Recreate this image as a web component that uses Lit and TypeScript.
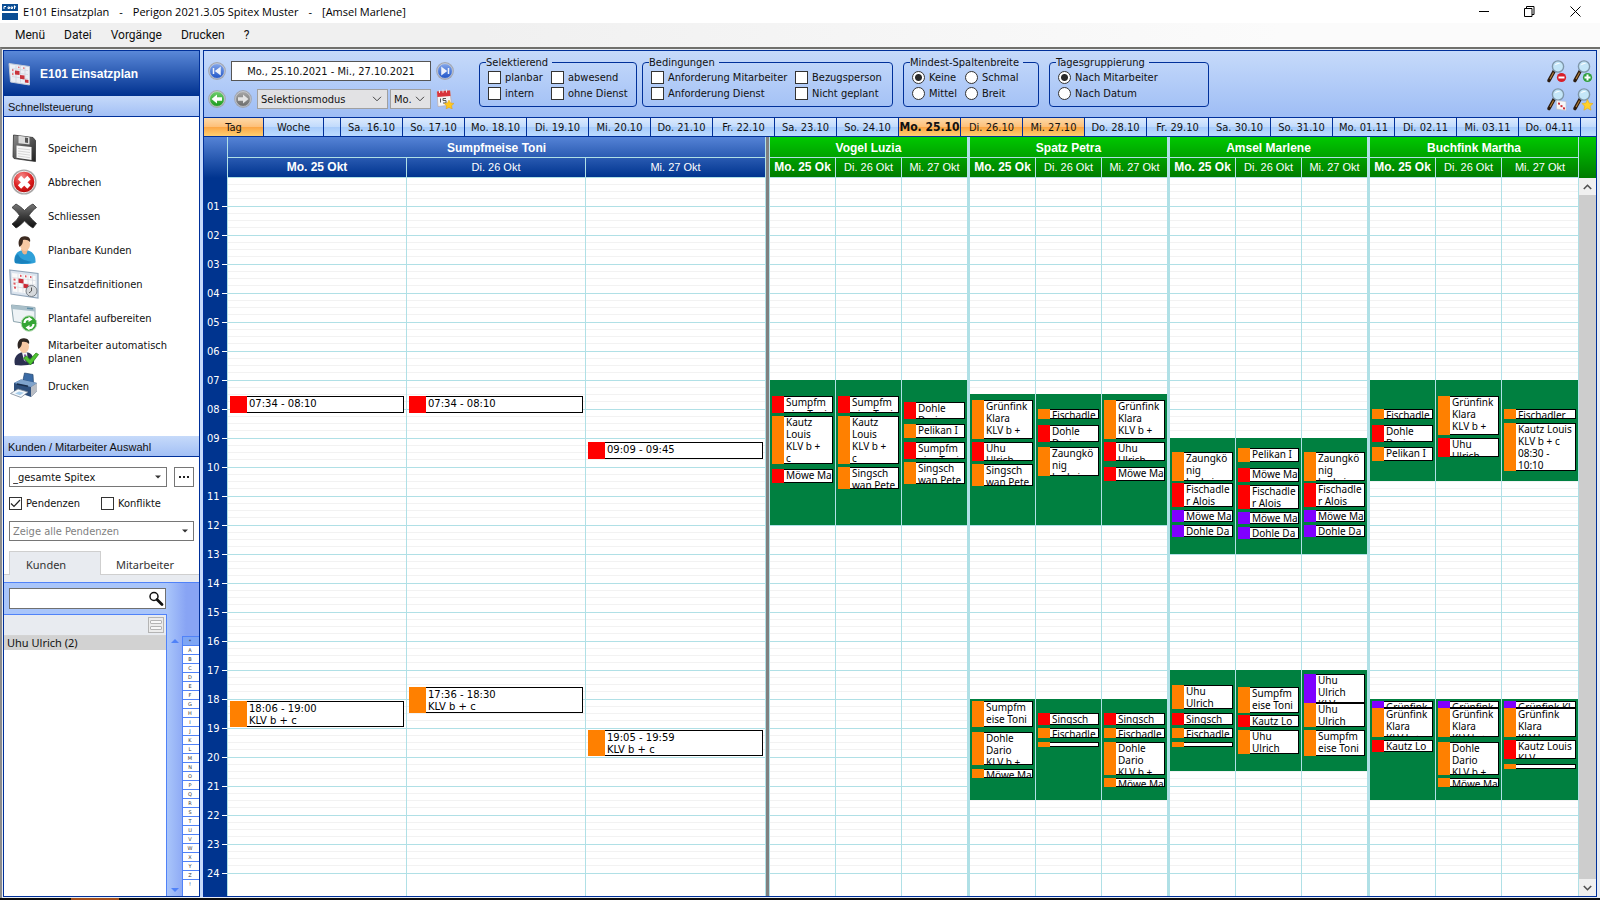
import { LitElement, html, css, svg, nothing } from "lit";
import { customElement } from "lit/decorators.js";
import { classMap } from "lit/directives/class-map.js";
import { styleMap } from "lit/directives/style-map.js";

const HOUR = 29;

type Kind = "red" | "orange" | "violet";
interface Visit {
  top: number;
  height: number;
  kind: Kind;
  lines: string[];
}
interface Day {
  label: string;
  bold?: boolean;
  shifts: [number, number][];
  visits: Visit[];
}
interface Group {
  name: string;
  main?: boolean;
  days: Day[];
}

const v = (kind: Kind, top: number, height: number, ...lines: string[]): Visit => ({ top, height, kind, lines });
const day = (label: string, shifts: [number, number][], ...visits: Visit[]): Day => ({
  label,
  bold: label.startsWith("Mo."),
  shifts,
  visits,
});

const groups: Group[] = [
  {
    name: "Sumpfmeise Toni",
    main: true,
    days: [
      day("Mo. 25 Okt", [], v("red", 218, 17, "07:34 - 08:10"), v("orange", 523, 26, "18:06 - 19:00", "KLV b + c")),
      day("Di. 26 Okt", [], v("red", 218, 17, "07:34 - 08:10"), v("orange", 509, 26, "17:36 - 18:30", "KLV b + c")),
      day("Mi. 27 Okt", [], v("red", 264, 17, "09:09 - 09:45"), v("orange", 552, 26, "19:05 - 19:59", "KLV b + c")),
    ],
  },
  {
    name: "Vogel Luzia",
    days: [
      day("Mo. 25 Ok", [[7, 12]],
        v("red", 218, 17, "Sumpfm", "eise Toni"),
        v("orange", 238, 48, "Kautz", "Louis", "KLV b +", "c"),
        v("red", 291, 14, "Möwe Ma")),
      day("Di. 26 Okt", [[7, 12]],
        v("red", 218, 17, "Sumpfm", "eise Toni"),
        v("orange", 238, 48, "Kautz", "Louis", "KLV b +", "c"),
        v("orange", 289, 22, "Singsch", "wan Pete")),
      day("Mi. 27 Okt", [[7, 12]],
        v("red", 224, 17, "Dohle", "Dario"),
        v("orange", 246, 14, "Pelikan I"),
        v("red", 264, 17, "Sumpfm", "eise Toni"),
        v("orange", 284, 22, "Singsch", "wan Pete")),
    ],
  },
  {
    name: "Spatz Petra",
    days: [
      day("Mo. 25 Ok", [[7.5, 12], [18, 21.5]],
        v("orange", 222, 39, "Grünfink", "Klara", "KLV b +"),
        v("red", 264, 19, "Uhu", "Ulrich"),
        v("orange", 286, 22, "Singsch", "wan Pete"),
        v("orange", 523, 26, "Sumpfm", "eise Toni"),
        v("orange", 554, 33, "Dohle", "Dario", "KLV b +"),
        v("orange", 591, 9, "Möwe Ma")),
      day("Di. 26 Okt", [[7.5, 12], [18, 21.5]],
        v("orange", 231, 10, "Fischadle"),
        v("red", 247, 17, "Dohle", "Dario"),
        v("orange", 269, 29, "Zaungkö", "nig", "Ludwig"),
        v("red", 535, 12, "Singsch"),
        v("orange", 550, 10, "Fischadle"),
        v("orange", 564, 5)),
      day("Mi. 27 Okt", [[7.5, 12], [18, 21.5]],
        v("orange", 222, 39, "Grünfink", "Klara", "KLV b +"),
        v("red", 264, 19, "Uhu", "Ulrich"),
        v("red", 289, 14, "Möwe Ma"),
        v("red", 535, 12, "Singsch"),
        v("orange", 550, 10, "Fischadle"),
        v("orange", 564, 33, "Dohle", "Dario", "KLV b +"),
        v("orange", 600, 9, "Möwe Ma")),
    ],
  },
  {
    name: "Amsel Marlene",
    days: [
      day("Mo. 25 Ok", [[9, 13], [17, 20.5]],
        v("orange", 274, 29, "Zaungkö", "nig", "Ludwig"),
        v("red", 305, 24, "Fischadle", "r Alois"),
        v("violet", 332, 12, "Möwe Ma"),
        v("violet", 347, 12, "Dohle Da"),
        v("orange", 507, 24, "Uhu", "Ulrich"),
        v("red", 535, 12, "Singsch"),
        v("orange", 550, 10, "Fischadle"),
        v("orange", 564, 5)),
      day("Di. 26 Okt", [[9, 13], [17, 20.5]],
        v("orange", 270, 14, "Pelikan I"),
        v("red", 290, 14, "Möwe Ma"),
        v("red", 307, 24, "Fischadle", "r Alois"),
        v("violet", 334, 12, "Möwe Ma"),
        v("violet", 349, 12, "Dohle Da"),
        v("orange", 509, 26, "Sumpfm", "eise Toni"),
        v("red", 537, 12, "Kautz Lo"),
        v("orange", 552, 24, "Uhu", "Ulrich")),
      day("Mi. 27 Okt", [[9, 13], [17, 20.5]],
        v("orange", 274, 29, "Zaungkö", "nig", "Ludwig"),
        v("red", 305, 24, "Fischadle", "r Alois"),
        v("violet", 332, 12, "Möwe Ma"),
        v("violet", 347, 12, "Dohle Da"),
        v("violet", 496, 29, "Uhu", "Ulrich", "KLV"),
        v("orange", 525, 24, "Uhu", "Ulrich"),
        v("orange", 552, 26, "Sumpfm", "eise Toni")),
    ],
  },
  {
    name: "Buchfink Martha",
    days: [
      day("Mo. 25 Ok", [[7, 10.5], [18, 21.5]],
        v("orange", 231, 10, "Fischadle"),
        v("red", 247, 17, "Dohle", "Dario"),
        v("orange", 269, 14, "Pelikan I"),
        v("violet", 523, 7, "Grünfink"),
        v("orange", 530, 29, "Grünfink", "Klara", "KLV b +"),
        v("red", 562, 12, "Kautz Lo")),
      day("Di. 26 Okt", [[7, 10.5], [18, 21.5]],
        v("orange", 218, 39, "Grünfink", "Klara", "KLV b +"),
        v("red", 260, 19, "Uhu", "Ulrich"),
        v("violet", 523, 7, "Grünfink"),
        v("orange", 530, 29, "Grünfink", "Klara", "KLV b +"),
        v("orange", 564, 33, "Dohle", "Dario", "KLV b +"),
        v("orange", 600, 9, "Möwe Ma")),
      day("Mi. 27 Okt", [[7, 10.5], [18, 21.5]],
        v("orange", 231, 10, "Fischadler"),
        v("orange", 245, 48, "Kautz Louis", "KLV b + c", "08:30 -", "10:10"),
        v("violet", 523, 7, "Grünfink Kl"),
        v("orange", 530, 29, "Grünfink", "Klara", "KLV b"),
        v("red", 562, 19, "Kautz Louis", "KLV"),
        v("orange", 586, 5)),
    ],
  },
];

const dates = [
  "Sa. 16.10", "So. 17.10", "Mo. 18.10", "Di. 19.10", "Mi. 20.10", "Do. 21.10", "Fr. 22.10", "Sa. 23.10", "So. 24.10",
  "Mo. 25.10", "Di. 26.10", "Mi. 27.10", "Do. 28.10", "Fr. 29.10", "Sa. 30.10", "So. 31.10", "Mo. 01.11", "Di. 02.11",
  "Mi. 03.11", "Do. 04.11",
];
const selectedDates = ["Mo. 25.10", "Di. 26.10", "Mi. 27.10"];

/* ---------- icons ---------- */

const planSheet = svg`
  <path d="M1 1.500 21.500 4.500V23L2.500 20Z" fill="#eceff5" stroke="#c3cad8" stroke-width="1"/>
  <path d="M4 6.500 20 8.500M4 10.500 20 12.500M4 14.500 20 17M8 3.500V20M12.500 4V20.500M17 5V21.500" stroke="#cfd4de" stroke-width=".8"/>
  <path d="M7 8.500l4.500.6v4l-4.500-.6zM12 13l4.500.6v3.800L12 16.800zM17 17.500l3.500.6v3l-3.500-.6z" fill="#c8343c"/>
  <path d="M4 7l1.500.2v2L4 9zM4 11l1.500.2v2L4 13zM10 4.500l1.500.2v1.600L10 6.100zM15 5.200l1.500.2V7L15 6.800z" fill="#e2747a"/>`;

const headIcon = svg`<svg class="i24" viewBox="0 0 24 24">${planSheet}</svg>`;

const icons: Record<string, unknown> = {
  save: svg`<svg class="i30" viewBox="0 0 30 30">
    <defs><linearGradient id="sv" x1="0" y1="0" x2="1" y2="1"><stop offset="0" stop-color="#8e8e8e"/><stop offset="1" stop-color="#202020"/></linearGradient></defs>
    <path d="M4.500 2 24 4.500 26.500 7.500V28.500L5 25.500 4 24Z" fill="url(#sv)" stroke="#333" stroke-width=".8"/>
    <path d="M9.500 2.800 20.500 4.200V11.500L9.500 10.200Z" fill="#dcdcdc"/><path d="M16 4.500l3 .4v5l-3-.4z" fill="#555"/>
    <path d="M7.500 12.500 22.500 14V27L7.500 24.800Z" fill="#f7f7f7"/><path d="M9 15.500l12 1.300M9 18l12 1.500M9 20.500l12 1.600M9 23l12 1.700" stroke="#cdcdcd" stroke-width=".8"/></svg>`,
  cancel: svg`<svg class="i30" viewBox="0 0 30 30">
    <defs><radialGradient id="cn" cx=".4" cy=".25" r=".8"><stop offset="0" stop-color="#f58a8a"/><stop offset=".6" stop-color="#dc1e1e"/><stop offset="1" stop-color="#b00808"/></radialGradient></defs>
    <circle cx="15" cy="15" r="12.600" fill="#a8a8a8"/><circle cx="15" cy="15" r="10.800" fill="url(#cn)" stroke="#eee" stroke-width="1"/>
    <path d="M10.500 10.500l9.500 9.500M20 10.500 10.500 20" stroke="#fff" stroke-width="4.600"/></svg>`,
  close: svg`<svg class="i30" viewBox="0 0 30 30">
    <defs><linearGradient id="cl" x1="0" y1="0" x2="0" y2="1"><stop offset="0" stop-color="#777"/><stop offset=".5" stop-color="#3c3c3c"/><stop offset="1" stop-color="#101010"/></linearGradient></defs>
    <path d="M3 6.500 7 3c3.500 2 6 4 8.500 6.500C18 7 20.500 4.500 24 3l3.500 3.500c-3 2-5.500 5-7.500 8 2.200 3 4.500 5.500 7.500 8L24 27c-3.500-2-6-4.500-8.500-7C13 22.500 10 25.500 7 27l-4-4c3.500-2.500 5.500-5 7.500-8.500-2-3-4.500-5.500-7.500-8Z" fill="url(#cl)" stroke="#333" stroke-width=".8"/></svg>`,
  person: svg`<svg class="i30" viewBox="0 0 30 30">
    <path d="M6 28c-2-7 2-11.500 6-12.500h7c4.500 1 8 5 7.500 12-5 2-15 2-20.500.5Z" fill="#2fa0d8"/>
    <path d="M9 19c2 6 10 7 14 8-5 2-13 2-17 1-1-4 .5-8 3-9Z" fill="#1a82bd"/>
    <path d="M12 14h7l-1.500 5c-2 1-3.500 0-4-1Z" fill="#e9b48c"/>
    <ellipse cx="16" cy="9.500" rx="5" ry="6.500" fill="#f7c9a4"/>
    <path d="M10.500 12C8 6 11 1 16 1.200c4 0 6 2.800 5 5.800-2-2-4-2.500-7-2 0 3-1 5-3.500 7Z" fill="#3c2a20"/></svg>`,
  plan: svg`<svg class="i30" viewBox="0 0 30 30">
    <path d="M.8 1 29 4.500V29L2 25Z" fill="#dbe4ee" stroke="#90a4b8" stroke-width="1.200"/>
    <path d="M3 4 26.500 7V25.500L4 22.500Z" fill="#fafafa"/>
    <path d="M3.500 8.500l23 3M4 13l22.500 3M4 17.500l22 3M9 5v18M14 5.500v18M19 6v18M23.500 6.500v18" stroke="#d4d8e0" stroke-width=".7"/>
    <path d="M9.500 9.500l5 .7v4.300l-5-.7zM14.500 14.800l5 .7v4l-5-.7z" fill="#cc2b36"/>
    <path d="M4.500 9.500l2 .3v2l-2-.3zM4.500 13.500l2 .3v2l-2-.3zM5 17.500l2 .3v2l-2-.3zM11 5.800l1.500.2v2L11 7.800zM16 6.300l1.500.2v2L16 8.300zM21 7l1.500.2v2L21 9z" fill="#e0565e"/>
    <circle cx="22.500" cy="22" r="5.500" fill="#d6d9dc" stroke="#777e86"/><path d="M22.500 18.500V22l-2.500 2" stroke="#555" fill="none"/></svg>`,
  board: svg`<svg class="i30" viewBox="0 0 30 30">
    <path d="M2.500 2 26 4.500V22L4.500 18.500Z" fill="#eef3f6" stroke="#8ba3ad"/>
    <path d="M2.500 2 26 4.500v4L3 6Z" fill="#a9bfc9"/><path d="M18 5.200l6 .6" stroke="#5f8ea6" stroke-width="1.500"/>
    <circle cx="20" cy="20.500" r="7.800" fill="#35a535" stroke="#b8dcb8"/>
    <path d="M15.500 20c0-3 2.500-4.500 5-3.800M24.500 21c0 3-2.500 4.500-5 3.800" stroke="#fff" stroke-width="2.200" fill="none"/>
    <path d="M19.500 13.500l4 3-4 2.600zM20.500 27.500l-4-3 4-2.600z" fill="#fff"/></svg>`,
  auto: svg`<svg class="i30" viewBox="0 0 30 30">
    <path d="M6 28c-2-7 2-11 6-12.500h7c4 1 6 5 6 11-5 2-14 2.500-19 1.500Z" fill="#2b3050"/>
    <path d="M13 15.500h5l1 9-4-1Z" fill="#f2f4f8"/><path d="M15 17.500h2l1 6-2 2Z" fill="#7a4f9e"/>
    <ellipse cx="15" cy="9.500" rx="5" ry="6.500" fill="#f7c9a4"/>
    <path d="M9.500 12C7 6 10 1 15 1.200c4 0 6 2.800 5 5.800-2-2-4-2.500-7-2 0 3-1 5-3.500 7Z" fill="#2e2622"/>
    <path d="M14.500 21l3-2 3.500 3.500 6-6.500 2.500 1.500-8 10.500Z" fill="#4fc332" stroke="#2c8c1c" stroke-width=".8"/></svg>`,
  print: svg`<svg class="i30" viewBox="0 0 30 30">
    <path d="M14 9 15.500 2 24 3.500 24.500 12Z" fill="#3b6ba5" stroke="#24466f" stroke-width=".7"/>
    <path d="M5 12 12 8.500 28 12v8l-6 6L5 20Z" fill="#2e4f7c"/>
    <path d="M5 12 12 8.500 28 12l-6 4Z" fill="#7fa3cc"/><path d="M22 16l6-4v8l-6 6Z" fill="#b9bdc4"/>
    <path d="M8 13l11 2.300" stroke="#1b2f4c" stroke-width="1.500"/>
    <path d="M1.500 22.500 9 18l10 3-7 5.500Z" fill="#f4f8fc" stroke="#7a8796" stroke-width=".8"/><path d="M6 22.500l4-2 5 1.300-4 2.500z" fill="#a9cdea"/></svg>`,
};

const actions: [string, string][] = [
  ["save", "Speichern"],
  ["cancel", "Abbrechen"],
  ["close", "Schliessen"],
  ["person", "Planbare Kunden"],
  ["plan", "Einsatzdefinitionen"],
  ["board", "Plantafel aufbereiten"],
  ["auto", "Mitarbeiter automatisch planen"],
  ["print", "Drucken"],
];

const orb = (id: string, light: string, dark: string, glyph: unknown) => svg`<svg class="i18" viewBox="0 0 18 18">
  <defs><linearGradient id=${id} x1="0" y1="0" x2="0" y2="1"><stop offset="0" stop-color=${light}/><stop offset="1" stop-color=${dark}/></linearGradient></defs>
  <circle cx="9" cy="9" r="8.900" fill="#a2a7b2"/><circle cx="9" cy="9" r="7.400" fill="url(#${id})" stroke="#d9dce2" stroke-width=".6"/>${glyph}</svg>`;
const orbFirst = orb("o1", "#86a8ea", "#1f55c8", svg`<path d="M5.500 6v6M12 6 8 9l4 3z" stroke="#eef2fb" stroke-width="1.500" fill="#eef2fb"/>`);
const orbLast = orb("o2", "#86a8ea", "#1f55c8", svg`<path d="M12.500 6v6M6 6l4 3-4 3z" stroke="#eef2fb" stroke-width="1.500" fill="#eef2fb"/>`);
const orbBack = orb("o3", "#6fce6f", "#1a9a1a", svg`<path d="M3.500 9 9 4.500v2.800h5v3.400H9v2.800z" fill="#fff"/>`);
const orbForward = orb("o4", "#a8a8a8", "#6b6b6b", svg`<path d="M14.500 9 9 4.500v2.800H4v3.400h5v2.800z" fill="#e4e4e4"/>`);

const calendarIcon = svg`<svg class="cal" viewBox="0 0 18 20">
  <path d="M1 2.500 14 1.500 15.500 16 2 17.500Z" fill="#f5f5f5" stroke="#b9a9a9" stroke-width=".7"/>
  <path d="M1 2.500 14 1.500 14.500 7 1.400 8Z" fill="#d8343c"/><path d="M3.500 1v3M7 .7v3M10.500.5v3" stroke="#fbe0e0" stroke-width="1"/>
  <path d="M4.500 9.500v4M7 9.500h3M7 9.500v2h3v2.500H7" stroke="#555" stroke-width="1" fill="none"/>
  <path d="M13 11l1.600 3 3.400.4-2.400 2.300.6 3.300-3.200-1.600L10 20l.6-3.300L8 14.400l3.400-.4z" fill="#ffc81e" stroke="#dd9500" stroke-width=".4"/></svg>`;

const magnifier = (badge: unknown) => svg`<svg class="mag" viewBox="0 0 22 23">
  <path d="M8.500 10.500 3 20.500" stroke="#2c1c10" stroke-width="3.600" stroke-linecap="round"/>
  <path d="M7.500 12.500 4 19" stroke="#b8813c" stroke-width="1.100"/>
  <circle cx="12" cy="6.500" r="5.600" fill="#c4e6f8" stroke="#7f97aa" stroke-width="1.400"/>
  <path d="M8.500 5.500c1-2.500 4-3.200 6-1.800-2 0-4 .6-6 1.800Z" fill="#fff"/>${badge}</svg>`;
const magnifiers: [string, unknown][] = [
  ["Verkleinern", magnifier(svg`<circle cx="15.500" cy="17.500" r="4.600" fill="#d81e28"/><path d="M12.500 17.500h6" stroke="#fff" stroke-width="2"/>`)],
  ["Vergrössern", magnifier(svg`<circle cx="15.500" cy="17.500" r="4.600" fill="#2f9f3c"/><path d="M12.500 17.500h6M15.500 14.500v6" stroke="#fff" stroke-width="2"/>`)],
  ["Plan", magnifier(svg`<path d="M10.500 12.500 20 13.500v9l-9.500-1.500Z" fill="#f6f6f8" stroke="#c0c4d0" stroke-width=".7"/><path d="M12 14.500l2 .2v2l-2-.2zM14.500 17l2 .2v2l-2-.2zM17 19.200l2 .2v2l-2-.2z" fill="#d0303a"/>`)],
  ["Favorit", magnifier(svg`<path d="M15.500 11.500l1.700 3.600 3.800.4-2.800 2.700.8 4-3.500-2-3.600 2 .8-4-2.700-2.700 3.800-.4z" fill="#ffd02a" stroke="#e8a800" stroke-width=".5"/>`)],
];

const chevron = svg`<svg class="arrow" viewBox="0 0 10 6" width="10" height="6"><path d="M1 .8 5 4.800 9 .8" fill="none" stroke="#444"/></svg>`;
const triangle = svg`<svg class="arrow" viewBox="0 0 6 4" width="6" height="4"><path d="M0 .5h6L3 3.500z" fill="#333"/></svg>`;

@customElement("app-root")
export class AppRoot extends LitElement {
  static styles = css`
    :host {
      --navy: #00309a;
      --line: #b0e0e6;
      --bar: linear-gradient(#c6dafa, #a3c0f5);
      display: flex;
      flex-direction: column;
      height: 100vh;
      min-width: 1280px;
      overflow: hidden;
      background: #f0f0f0;
      color: #111;
      font: 11px/13px "DejaVu Sans Condensed", "DejaVu Sans", sans-serif;
      cursor: default;
    }
    * { box-sizing: border-box; }
    button, input, select { font: inherit; color: inherit; margin: 0; }
    button { border: 0; padding: 0; background: none; text-align: inherit; }
    svg { display: block; flex: none; }
    .i18 { width: 18px; height: 18px; }
    .cal { width: 18px; height: 20px; }
    .i24 { width: 24px; height: 24px; }
    .i30 { width: 30px; height: 30px; }
    .mag { width: 22px; height: 23px; }

    .title {
      display: flex;
      align-items: center;
      height: 23px;
      flex: none;
      background: #fff;
      padding: 0 19px 0 2px;
      font: 11px/16px "Open Sans", sans-serif;
    }
    .title .caption { display: flex; gap: 10px; padding-left: 5px; flex: 1; color: #000; }
    .controls { display: flex; gap: 28px; }
    .menu {
      display: flex;
      align-items: center;
      gap: 19px;
      height: 24px;
      flex: none;
      padding-left: 15px;
      background: linear-gradient(90deg, #f0f0f0 30%, #fbfbfb 80%);
      font: 12px/16px Roboto, sans-serif;
    }
    .frame {
      display: flex;
      flex: 1;
      min-height: 0;
      border-top: 2px solid #70706c;
      border-left: 2px solid #8c8c8c;
      padding: 1px 3px 1px 1px;
      background: #e9edf2;
    }
    .taskbar { height: 2px; flex: none; background: #0c0c0c; padding-left: 71px; }
    .taskbar span { display: block; width: 48px; height: 2px; background: #a34f1b; }

    /* left pane */
    .side {
      display: flex;
      flex-direction: column;
      width: 197px;
      flex: none;
      border: 1px solid var(--navy);
      background: #fff;
    }
    .side h1 {
      display: flex;
      align-items: center;
      gap: 8px;
      height: 45px;
      flex: none;
      margin: 0;
      padding-left: 4px;
      background: linear-gradient(#5a88d8, #00318f);
      color: #fff;
      font: bold 12px/16px "Liberation Sans", sans-serif;
    }
    .side h2 {
      height: 21px;
      flex: none;
      margin: 0;
      padding-left: 4px;
      border-bottom: 1px solid var(--navy);
      background: var(--bar);
      font: 11px/22px "Liberation Sans", sans-serif;
    }
    .actions { display: flex; flex-direction: column; padding: 14px 0 33px; }
    .action { display: grid; grid-template-columns: 30px 1fr; gap: 9px; align-items: center; height: 34px; padding: 0 4px 0 5px; }
    .filters { display: grid; gap: 10px; padding: 10px 5px 10px; }
    .row { display: flex; gap: 7px; }
    .combo { display: grid; flex: 1; align-items: center; }
    .combo select {
      grid-area: 1 / 1;
      appearance: none;
      width: 100%;
      height: 20px;
      padding: 0 16px 0 3px;
      border: 1px solid #767676;
      border-radius: 0;
      background: #fff;
    }
    .combo .arrow { grid-area: 1 / 1; justify-self: end; margin-right: 6px; pointer-events: none; }
    .combo.muted select { color: #7f7f7f; }
    .more { width: 20px; height: 20px; border: 1px solid #767676; background: #fff; display: grid; place-items: center; }
    .pair { display: grid; grid-template-columns: 92px 1fr; padding-bottom: 1px; }
    .check { display: flex; align-items: center; gap: 4px; white-space: nowrap; height: 13px; }
    .check input {
      appearance: none;
      width: 13px;
      height: 13px;
      flex: none;
      border: 1px solid #333;
      background: #fff center / 11px 11px no-repeat;
    }
    .check input[type="checkbox"]:checked {
      background-image: url("data:image/svg+xml,%3Csvg xmlns='http://www.w3.org/2000/svg' viewBox='0 0 11 11'%3E%3Cpath d='M1 5.500 4 8.500 10 2' fill='none' stroke='%23222' stroke-width='1.200'/%3E%3C/svg%3E");
    }
    .check input[type="radio"] { border-radius: 50%; }
    .check input[type="radio"]:checked { background-image: radial-gradient(circle, #2a2a2a 3px, transparent 4px); }
    .tabs { display: flex; height: 24px; flex: none; padding-left: 5px; border-bottom: 1px solid #cfcfcf; font: 11px/16px "Noto Sans", sans-serif; color: #333; }
    .tab { width: 92px; height: 24px; padding: 3px 0 0 14px; border: 1px solid transparent; border-bottom: 0; }
    .tab.on { padding-left: 16px; background: #e8ebf0; border-color: #cfcfcf; }
    .band { height: 7px; flex: none; background: #e8ebf0; }
    .picker { display: grid; grid-template-columns: 163px 1fr; flex: 1; min-height: 0; border-top: 1px solid #5082f8; }
    .search { display: flex; align-items: center; height: 31px; padding: 0 1px 0 5px; background: #a9c5fa; }
    .field { display: grid; flex: 1; align-items: center; }
    .field input { grid-area: 1 / 1; width: 100%; height: 21px; border: 1px solid #707070; border-radius: 0; background: #fff; padding: 0 20px 0 3px; }
    .field svg { grid-area: 1 / 1; justify-self: end; margin-right: 2px; }
    .list { display: flex; flex-direction: column; border-top: 1px solid #5082f8; border-right: 1px solid #5082f8; background: #fff; flex: 1; }
    .listhead { display: flex; justify-content: flex-end; align-items: center; height: 21px; padding-right: 2px; background: #e8ebf0; border-bottom: 1px solid #d4d4d4; }
    .layout { display: grid; gap: 2px; width: 16px; height: 16px; padding: 2px 1px; border: 1px solid #b4b4b4; background: #ececec; }
    .layout i { display: block; border: 1px solid #b4b4b4; border-radius: 1px; background: #f8f8f8; }
    .entry { height: 14px; padding-left: 3px; background: #d2d2d2; font: 11px/14px "Noto Sans", sans-serif; }
    .left { display: flex; flex-direction: column; min-height: 0; }
    .rail { display: grid; grid-template-columns: 15px 1fr; padding-top: 53px; min-height: 0; background: linear-gradient(90deg, #a9c5fa, #88a4f4 60%); }
    .scroll { display: flex; flex-direction: column; justify-content: space-between; align-items: center; padding: 3px 0 4px; }
    .abc { display: flex; flex-direction: column; border-left: 1px solid #5082f8; border-top: 1px solid #5082f8; background: #fff; overflow: hidden; }
    .abc a { display: block; height: 9px; flex: none; border-bottom: 1px solid #5082f8; color: #333; text-decoration: none; text-align: center; font: 5px/8px "DejaVu Sans", sans-serif; padding-right: 2px; }
    .abc a:first-child { background: #7ea6f4; }
    .abc a:last-child { border-bottom: 0; }

    /* right pane */
    .main {
      display: flex;
      flex-direction: column;
      flex: 1;
      min-width: 0;
      border: 1px solid var(--navy);
      background: #fff;
    }
    .gutter { width: 3px; flex: none; background: #c6dafa; }
    .tools { display: flex; height: 66px; flex: none; padding: 5px 2px 0 4px; background: linear-gradient(#c6dafa, #9ebdf5); }
    .nav { display: flex; flex-direction: column; gap: 8px; padding-top: 5px; width: 246px; }
    .line { display: flex; align-items: center; gap: 5px; height: 20px; }
    .line .date { flex: 1; min-width: 0; height: 20px; border: 1px solid #555; border-radius: 0; background: #fff; text-align: center; padding: 0; }
    .line .pad { margin-right: 3px; }
    .line .combo { min-width: 0; }
    .line .combo.small { flex: 0 0 41px; margin-left: -3px; }
    .line .combo select { border-color: #a0a0a0; background: #e2e2e4; }
    .boxes { display: flex; gap: 10px; align-items: flex-start; padding-left: 25px; flex: 1; }
    .duo { display: flex; gap: 5px; }
    fieldset {
      display: grid;
      gap: 3px 0;
      margin: 0;
      height: 51px;
      padding: 2px 0 0 8px;
      border: 1px solid var(--navy);
      border-radius: 4px;
      min-width: 0;
      align-content: start;
    }
    legend { padding: 0 4px 0 0; margin-left: -2px; line-height: 13px; }
    .f1 { width: 158px; grid-template-columns: 63px 1fr; }
    .f2 { width: 251px; grid-template-columns: 144px 1fr; }
    .f3 { width: 136px; grid-template-columns: 53px 1fr; }
    .f4 { width: 160px; }
    .zoom { display: grid; grid-template-columns: 22px 22px; gap: 5px 4px; align-content: start; padding-top: 4px; }

    .dates { display: grid; grid-template-columns: 60px 60px 17px repeat(20, 1fr) 15px; height: 20px; flex: none; border: solid var(--navy); border-width: 1px 0; }
    .dates button, .dates span {
      border-right: 1px solid var(--navy);
      text-align: center;
      background: linear-gradient(#dceafd, #c2dbfc 48%, #a8cbfa 50%, #bcdcff);
      white-space: nowrap;
      overflow: hidden;
    }
    .dates span:last-child { border-right: 0; }
    .dates .on { background: linear-gradient(#fdd9a8, #fdc07a 48%, #fba544 50%, #ffcf70); }
    .dates .now { font-weight: bold; font-size: 12px; }

    .plan { display: grid; grid-template-columns: 24px 542fr 200fr 200fr 200fr 209fr 17px; flex: 1; min-height: 0; }
    .axis { display: flex; flex-direction: column; background: #00348f; border-right: 1px solid var(--line); color: #fff; overflow: hidden; }
    .axis .top { height: 41px; flex: none; background: linear-gradient(#5583d6, #00348f); }
    .axis ol { list-style: none; margin: 0; padding: 14px 0 0; }
    .axis li { display: flex; align-items: center; justify-content: space-between; height: 29px; padding-left: 3px; }
    .axis li::after { content: ""; width: 5px; height: 1px; background: #fff; }
    .group { display: flex; flex-direction: column; min-width: 0; border-right: 3px solid var(--line); }
    .group.main-col { border-right: 1px solid var(--line); }
    .group:nth-last-child(2) { border-right-width: 1px; }
    .sep { display: grid; grid-template-columns: 1fr 4px; }
    .sep::after { content: ""; background: #808080; border-right: 1px solid var(--line); }
    .head { height: 41px; flex: none; background: linear-gradient(#00c800, #007c00); color: #fff; font: 11px/19px "Liberation Sans", sans-serif; text-align: center; border-bottom: 1px solid var(--line); }
    .blue .head { background: linear-gradient(#5583d6, #00348f); }
    .head h3 { margin: 0; height: 21px; font: bold 12px/22px "Liberation Sans", sans-serif; border-bottom: 1px solid var(--line); }
    .cols { display: grid; grid-template-columns: 65fr 1px 65fr 1px 65fr; }
    .blue .cols { grid-template-columns: 178fr 1px 178fr 1px 179fr; }
    .last .cols { grid-template-columns: 65fr 1px 65fr 1px 76fr; }
    .cols > .bar { background: var(--line); }
    .head .cols > div { height: 19px; overflow: hidden; white-space: nowrap; }
    .head .cols .bold { font-weight: bold; font-size: 12px; }
    .body {
      flex: 1;
      min-height: 0;
      background-repeat: no-repeat;
      background-size: 100% 696px;
      background-image: repeating-linear-gradient(
        #fff 0 6px, #f2f2f2 6px 7px, #fff 7px 13px, #f2f2f2 13px 14px,
        #fff 14px 20px, #f2f2f2 20px 21px, #fff 21px 28px, #b0e0e6 28px 29px
      );
    }
    .lane { position: relative; overflow: hidden; }
    .shift { position: absolute; left: 0; right: 0; background: #008040; }
    .visit { position: absolute; left: 2px; right: 2px; display: flex; overflow: hidden; color: #000; font: 10px/10px "Noto Sans", sans-serif; }
    .visit::before { content: ""; width: 12px; flex: none; background: var(--mark); }
    .blue .visit { font: 10px/12px "DejaVu Sans", sans-serif; }
    .blue .visit::before { width: 17px; }
    .blue .text { padding-top: 1px; }
    .visit.red { --mark: #ff0000; }
    .visit.orange { --mark: #ff8000; }
    .visit.violet { --mark: #8000ff; }
    .text { flex: 1; min-width: 0; overflow: hidden; white-space: nowrap; padding-left: 2px; background: #fff; border: solid #000; border-width: 1px 1px 1px 0; }
    .text div { height: 12px; }
    .vbar { display: flex; flex-direction: column; background: #f0f0f0; }
    .vbar .top { height: 41px; flex: none; background: linear-gradient(#00c800, #007c00); }
    .vbar .thumb { flex: 1; background: #cdcdcd; }
    .vbar button { height: 17px; flex: none; display: grid; place-items: center; }
  `;

  private check(label: string, checked = false) {
    return html`<label class="check"><input type="checkbox" ?checked=${checked} />${label}</label>`;
  }

  private radio(name: string, label: string, checked = false) {
    return html`<label class="check"><input type="radio" name=${name} ?checked=${checked} />${label}</label>`;
  }

  private renderSide() {
    const letters = ["*", ..."ABCDEFGHIJKLMNOPQRSTUVWXYZ", "!"];
    return html`<aside class="side">
      <h1>${headIcon}E101 Einsatzplan</h1>
      <h2>Schnellsteuerung</h2>
      <div class="actions">
        ${actions.map(([icon, label]) => html`<button class="action">${icons[icon]}<span>${label}</span></button>`)}
      </div>
      <h2>Kunden / Mitarbeiter Auswahl</h2>
      <div class="filters">
        <div class="row">
          <div class="combo"><select aria-label="Organisation"><option>_gesamte Spitex</option></select>${triangle}</div>
          <button class="more" aria-label="Mehr">
            <svg width="10" height="2" viewBox="0 0 10 2"><path d="M0 0h2v2H0zM4 0h2v2H4zM8 0h2v2H8z" fill="#222" /></svg>
          </button>
        </div>
        <div class="pair">${this.check("Pendenzen", true)}${this.check("Konflikte")}</div>
        <div class="combo muted"><select aria-label="Pendenzen anzeigen"><option>Zeige alle Pendenzen</option></select>${triangle}</div>
      </div>
      <div class="tabs"><button class="tab on">Kunden</button><button class="tab">Mitarbeiter</button></div>
      <div class="band"></div>
      <div class="picker">
        <div class="left">
          <div class="search">
            <div class="field">
              <input type="text" aria-label="Suche" />
              <svg width="16" height="16" viewBox="0 0 16 16">
                <circle cx="6" cy="5.500" r="4" fill="#fff" stroke="#111" stroke-width="1.500" />
                <path d="M9 8.500 14 13.500" stroke="#111" stroke-width="2.800" stroke-linecap="round" />
              </svg>
            </div>
          </div>
          <div class="list">
            <div class="listhead"><button class="layout" aria-label="Ansicht"><i></i><i></i></button></div>
            <div class="entry">Uhu Ulrich (2)</div>
          </div>
        </div>
        <div class="rail">
          <div class="scroll">
            <svg width="8" height="4" viewBox="0 0 8 4"><path d="M0 4 4 0l4 4z" fill="#5082f8" /></svg>
            <svg width="8" height="4" viewBox="0 0 8 4"><path d="M0 0l4 4 4-4z" fill="#5082f8" /></svg>
          </div>
          <nav class="abc">${letters.map((l) => html`<a href="#">${l}</a>`)}</nav>
        </div>
      </div>
    </aside>`;
  }

  private renderTools() {
    return html`<div class="tools">
      <div class="nav">
        <div class="line">
          <button aria-label="Zurück">${orbFirst}</button>
          <input class="date" type="text" aria-label="Zeitraum" value="Mo., 25.10.2021 - Mi., 27.10.2021" />
          <button aria-label="Vor">${orbLast}</button>
        </div>
        <div class="line">
          <button class="pad" aria-label="Rückgängig">${orbBack}</button>
          <button aria-label="Wiederholen">${orbForward}</button>
          <div class="combo"><select aria-label="Modus"><option>Selektionsmodus</option></select>${chevron}</div>
          <div class="combo small"><select aria-label="Wochentag"><option>Mo.</option></select>${chevron}</div>
          <button aria-label="Kalender">${calendarIcon}</button>
        </div>
      </div>
      <div class="boxes">
        <div class="duo">
          <fieldset class="f1">
            <legend>Selektierend</legend>
            ${this.check("planbar")}${this.check("abwesend")}${this.check("intern")}${this.check("ohne Dienst")}
          </fieldset>
          <fieldset class="f2">
            <legend>Bedingungen</legend>
            ${this.check("Anforderung Mitarbeiter")}${this.check("Bezugsperson")}${this.check("Anforderung Dienst")}${this.check("Nicht geplant")}
          </fieldset>
        </div>
        <fieldset class="f3">
          <legend>Mindest-Spaltenbreite</legend>
          ${this.radio("width", "Keine", true)}${this.radio("width", "Schmal")}${this.radio("width", "Mittel")}${this.radio("width", "Breit")}
        </fieldset>
        <fieldset class="f4">
          <legend>Tagesgruppierung</legend>
          ${this.radio("grouping", "Nach Mitarbeiter", true)}${this.radio("grouping", "Nach Datum")}
        </fieldset>
      </div>
      <div class="zoom">${magnifiers.map(([label, icon]) => html`<button aria-label=${label}>${icon}</button>`)}</div>
    </div>`;
  }

  private renderDates() {
    return html`<div class="dates">
      <button class="on">Tag</button><button>Woche</button><span></span>
      ${dates.map(
        (d) => html`<button class=${classMap({ on: selectedDates.includes(d), now: d === selectedDates[0] })}>${d}</button>`
      )}
      <span></span>
    </div>`;
  }

  private renderLane(d: Day) {
    return html`<div class="lane">
      ${d.shifts.map(([from, to]) => {
        const top = Math.floor(from * HOUR) - 1;
        const height = Math.floor(to * HOUR) - 1 - top;
        return html`<div class="shift" style=${styleMap({ top: `${top}px`, height: `${height}px` })}></div>`;
      })}
      ${d.visits.map(
        (e) => html`<div class="visit ${e.kind}" style=${styleMap({ top: `${e.top}px`, height: `${e.height}px` })}>
          <div class="text">${e.lines.map((l) => html`<div>${l}</div>`)}</div>
        </div>`
      )}
    </div>`;
  }

  private renderGroup(g: Group, index: number) {
    const bar = (i: number) => (i > 0 ? html`<div class="bar"></div>` : nothing);
    const content = html`<section
      class=${classMap({ group: true, blue: !!g.main, "main-col": !!g.main, last: index === groups.length - 1 })}
    >
      <div class="head">
        <h3>${g.name}</h3>
        <div class="cols">
          ${g.days.map((d, i) => html`${bar(i)}<div class=${classMap({ bold: !!d.bold })}>${d.label}</div>`)}
        </div>
      </div>
      <div class="body cols">${g.days.map((d, i) => html`${bar(i)}${this.renderLane(d)}`)}</div>
    </section>`;
    return g.main ? html`<div class="sep">${content}</div>` : content;
  }

  render() {
    return html`
      <header class="title">
        <svg width="16" height="16" viewBox="0 0 16 16">
          <path d="M0 0h16v7H0zM0 9h16v7H0z" fill="#0a4d94" />
          <path d="M2 5V2.500h2M6 3h1.500v1.500H6zM9 3h1.500v1.500H9zM12.500 1.500v3.500M11.800 2.800h2.200" stroke="#fff" fill="none" stroke-width="1" />
        </svg>
        <div class="caption"><span>E101 Einsatzplan</span><span>-</span><span>Perigon 2021.3.05 Spitex Muster</span><span>-</span><span>[Amsel Marlene]</span></div>
        <div class="controls">
          <svg width="17" height="11" viewBox="0 0 17 11"><path d="M0 5.500h10" stroke="#000" /></svg>
          <svg width="18" height="11" viewBox="0 0 18 11"><path d="M.5 2.500h7.500v8H.5zM2.500 2.500V.5h7.500v8H8" fill="none" stroke="#000" /></svg>
          <svg width="11" height="11" viewBox="0 0 11 11"><path d="M.5.5l10 10M10.500.5l-10 10" stroke="#000" /></svg>
        </div>
      </header>
      <nav class="menu">
        <button>Menü</button><button>Datei</button><button>Vorgänge</button><button>Drucken</button><button>?</button>
      </nav>
      <div class="frame">
        ${this.renderSide()}
        <div class="gutter"></div>
        <main class="main">
          ${this.renderTools()} ${this.renderDates()}
          <div class="plan">
            <div class="axis">
              <div class="top"></div>
              <ol>
                ${Array.from({ length: 24 }, (_, i) => html`<li>${String(i + 1).padStart(2, "0")}</li>`)}
              </ol>
            </div>
            ${groups.map((g, i) => this.renderGroup(g, i))}
            <div class="vbar">
              <div class="top"></div>
              <button aria-label="Nach oben"><svg width="9" height="6" viewBox="0 0 9 6"><path d="M.8 5 4.500 1.300 8.200 5" fill="none" stroke="#505050" stroke-width="1.600" /></svg></button>
              <div class="thumb"></div>
              <button aria-label="Nach unten"><svg width="9" height="6" viewBox="0 0 9 6"><path d="M.8 1 4.500 4.700 8.200 1" fill="none" stroke="#505050" stroke-width="1.600" /></svg></button>
            </div>
          </div>
        </main>
      </div>
      <footer class="taskbar"><span></span></footer>
    `;
  }
}
